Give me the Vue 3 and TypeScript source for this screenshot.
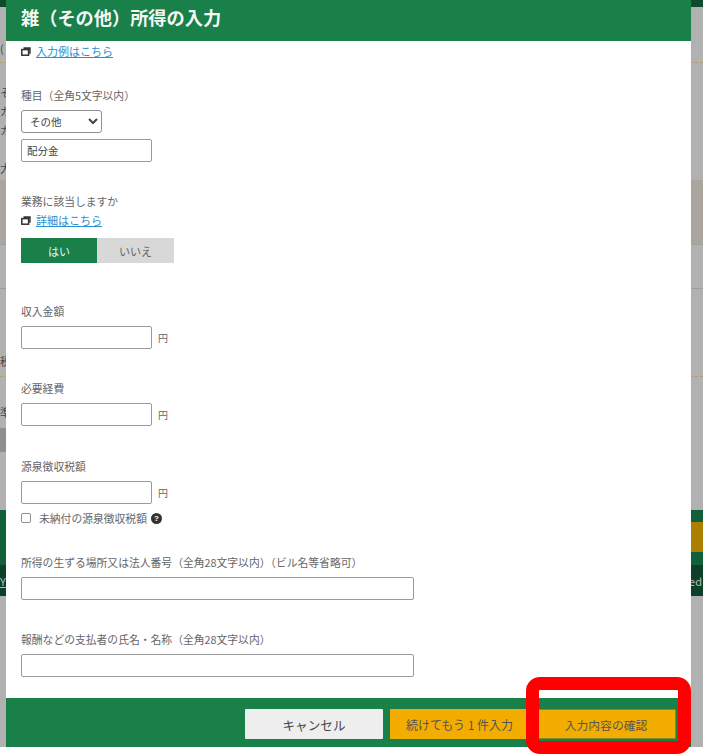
<script setup lang="ts">
import { ref } from 'vue'

const answer = ref<'yes' | 'no'>('yes')
const category = ref('その他')
const payment = ref('配分金')
const amountFields = [
  { id: 'income', label: '収入金額' },
  { id: 'expense', label: '必要経費' },
  { id: 'withheld', label: '源泉徴収税額' },
]
const textFields = [
  { id: 'place', label: '所得の生ずる場所又は法人番号（全角28文字以内）（ビル名等省略可）' },
  { id: 'payer', label: '報酬などの支払者の氏名・名称（全角28文字以内）' },
]
</script>

<template>
  <div class="page">
    <div class="backdrop" aria-hidden="true">
      <div class="bg-top"></div>
      <div class="bg-paren">(</div>
      <div class="bg-dots"></div>
      <div class="bg-copy">
        <span>そ</span><span>ガ</span><span>カ</span><span class="bg-big">大</span>
      </div>
      <div class="bg-taupe"></div>
      <div class="bg-rule"></div>
      <div class="bg-tax">税</div>
      <div class="bg-dots bg-dots2"></div>
      <div class="bg-note">準</div>
      <div class="bg-chip"></div>
      <div class="bg-footer">
        <div class="bg-gold"></div>
        <div class="bg-dark"><span class="bg-left">Y</span><span class="bg-right">ved</span></div>
      </div>
    </div>

    <section class="modal">
      <header class="modal-head"><h1>雑（その他）所得の入力</h1></header>

      <div class="modal-body">
        <a class="link first-link" href="#">
          <svg class="win" viewBox="0 0 10 9"><path d="M2.500 .3h7.200v6.400H8.200V2H2.500z" fill="#333"/><rect x=".8" y="2.600" width="6.800" height="5.600" fill="none" stroke="#333" stroke-width="1.500"/></svg>
          <span>入力例はこちら</span>
        </a>

        <label class="field-label kind-label" for="cat">種目（全角5文字以内）</label>
        <select id="cat" v-model="category" class="select"><option>その他</option></select>
        <input v-model="payment" class="input" type="text" />

        <p class="field-label biz-label">業務に該当しますか</p>
        <a class="link second-link" href="#">
          <svg class="win" viewBox="0 0 10 9"><path d="M2.500 .3h7.200v6.400H8.200V2H2.500z" fill="#333"/><rect x=".8" y="2.600" width="6.800" height="5.600" fill="none" stroke="#333" stroke-width="1.500"/></svg>
          <span>詳細はこちら</span>
        </a>
        <div class="toggle">
          <button type="button" :class="{ on: answer === 'yes' }" @click="answer = 'yes'">はい</button>
          <button type="button" :class="{ on: answer === 'no' }" @click="answer = 'no'">いいえ</button>
        </div>

        <div class="amounts">
          <div v-for="f in amountFields" :key="f.id" class="amount">
            <label class="field-label" :for="f.id">{{ f.label }}</label>
            <div class="amount-row">
              <input :id="f.id" class="input" type="text" />
              <span class="yen">円</span>
            </div>
          </div>
        </div>

        <label class="check">
          <input type="checkbox" />
          <span>未納付の源泉徴収税額</span>
          <i class="help">?</i>
        </label>

        <div v-for="f in textFields" :key="f.id" class="wide" :class="f.id">
          <label class="field-label" :for="f.id">{{ f.label }}</label>
          <input :id="f.id" class="input input-wide" type="text" />
        </div>
      </div>

      <footer class="modal-foot">
        <button type="button" class="btn cancel">キャンセル</button>
        <button type="button" class="btn gold">続けてもう 1 件入力</button>
        <button type="button" class="btn gold confirm">入力内容の確認</button>
      </footer>
    </section>

    <div class="callout" aria-hidden="true"></div>
  </div>
</template>

<style>
html, body { margin: 0; background: #fff; overflow: hidden; }
</style>

<style scoped>
* { box-sizing: border-box; }
.page {
  position: relative;
  width: 703px;
  height: 754px;
  overflow: hidden;
  font-family: "Noto Sans CJK JP", "Noto Sans", sans-serif;
  color: #555;
}
.backdrop {
  position: absolute;
  inset: 0 0 7px 0;
  background: #b1b1b1;
  display: flex;
  flex-direction: column;
  font-size: 11px;
  line-height: 14px;
  color: #444;
}
.bg-top { height: 7px; background: #0f4a2c; }
.bg-paren { margin-top: 34px; height: 14px; }
.bg-dots { margin-top: 7px; height: 1px; border-top: 1px dashed #b59a70; }
.bg-copy { margin-top: 22px; height: 95px; display: flex; flex-direction: column; gap: 5px; }
.bg-big { margin-top: 19px; }
.bg-taupe { height: 65px; background: #aaa59f; border-bottom: 1px solid #9f9f9f; }
.bg-rule { margin-top: 43px; height: 1px; background: #9d9d9d; }
.bg-tax { margin-top: 65px; height: 14px; }
.bg-dots2 { margin-top: 8px; }
.bg-note { margin-top: 28px; height: 14px; }
.bg-chip { margin-top: 9px; width: 6px; height: 24px; background: #8f8f8f; }
.bg-footer { margin-top: 58px; height: 86px; background: #10603a; display: flex; flex-direction: column; }
.bg-gold { margin: 12px 0 0 auto; width: 12px; height: 30px; background: #ad7f00; }
.bg-dark {
  margin-top: auto;
  height: 31px;
  background: #0c4029;
  display: flex;
  justify-content: space-between;
  align-items: center;
  color: #bbb;
  font-size: 11px;
}
.bg-left { text-decoration: underline; }
.bg-right { margin-right: 1px; }

.modal {
  position: absolute;
  left: 6px;
  top: 0;
  width: 685px;
  height: 747px;
  background: #fff;
  display: flex;
  flex-direction: column;
}
.modal-head {
  height: 41px;
  flex: none;
  background: #198049;
  display: flex;
  align-items: center;
  padding-left: 15px;
}
.modal-head h1 {
  margin: 0 0 6px;
  font-size: 18.200px;
  line-height: 1;
  font-weight: 700;
  color: #f4f8f5;
}
.modal-body {
  flex: 1;
  padding-left: 15px;
  display: flex;
  flex-direction: column;
  align-items: flex-start;
  font-size: 11px;
}
.field-label {
  display: block;
  margin: 0;
  font-size: 10.800px;
  line-height: 14px;
  color: #666;
}
.link {
  display: flex;
  align-items: center;
  gap: 5px;
  color: #2b8fd0;
  font-size: 11px;
  line-height: 14px;
  text-decoration: underline;
}
.win { width: 10px; height: 9px; flex: none; }
.first-link { margin-top: 3px; }
.kind-label { margin-top: 30px; }
.select {
  margin-top: 8px;
  width: 81px;
  height: 23px;
  border: 1px solid #8f8f8f;
  border-radius: 3px;
  background: #fff;
  padding-left: 4px;
  font: inherit;
  font-size: 10.500px;
  color: #444;
}
.input {
  height: 23px;
  width: 131px;
  border: 1px solid #9a9a9a;
  border-radius: 2px;
  background: #fff;
  padding: 0 5px;
  font: inherit;
  font-size: 10.500px;
  color: #444;
}
.select + .input { margin-top: 6px; }
.biz-label { margin-top: 32px; }
.second-link { margin-top: 5px; }
.toggle { display: flex; margin-top: 11px; }
.toggle button {
  width: 76px;
  height: 25px;
  border: 0;
  padding: 0;
  background: #d8d8d8;
  color: #666;
  font: inherit;
  font-size: 11px;
}
.toggle button + button { width: 77px; }
.toggle .on { background: #198049; color: #e8f2ec; }
.amounts { margin-top: 41px; width: 100%; display: flex; flex-direction: column; gap: 32px; }
.amount:last-child { margin-top: 1px; }
.amount-row { margin-top: 8px; display: flex; align-items: center; gap: 6px; }
.yen { font-size: 10px; color: #666; }
.check {
  margin-top: 7px;
  display: flex;
  align-items: center;
  font-size: 10.800px;
  line-height: 14px;
  color: #666;
}
.check input {
  margin: 0 8px 0 0;
  width: 10px;
  height: 10px;
  appearance: none;
  border: 1px solid #8f8f8f;
  border-radius: 2px;
  background: #fff;
}
.help {
  margin-left: 4px;
  width: 11px;
  height: 11px;
  border-radius: 50%;
  background: #333;
  color: #fff;
  font: 700 8px/11px "Liberation Sans", sans-serif;
  text-align: center;
}
.wide { width: 100%; }
.wide.place { margin-top: 30px; }
.wide.payer { margin-top: 32px; }
.wide .input-wide { margin-top: 8px; display: block; width: 393px; }
.modal-foot {
  height: 49px;
  flex: none;
  background: #198049;
  display: flex;
  align-items: flex-start;
  justify-content: flex-end;
  gap: 7px;
  padding: 11px 15px 0 0;
}
.btn {
  height: 30px;
  border: 0;
  border-radius: 1px;
  padding: 0;
  font: inherit;
  color: #444;
}
.cancel { width: 138px; background: #eee; font-size: 12.600px; }
.gold { background: #f3ad00; color: #555; font-size: 12px; }
.btn.gold { width: 139px; }
.btn.confirm { width: 140px; border: 1px solid #7f8a2a; font-size: 11.800px; }
.callout {
  position: absolute;
  left: 526px;
  top: 677px;
  width: 165px;
  height: 77px;
  border: 13px solid #fe0000;
  border-radius: 14px;
}
</style>
